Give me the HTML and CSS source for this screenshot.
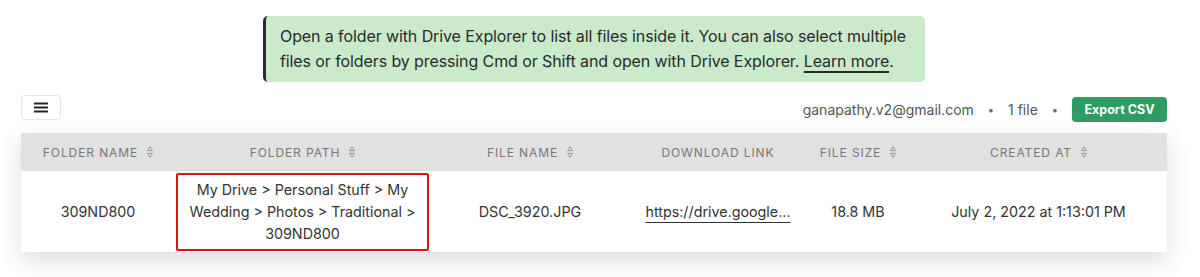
FILE: index.html
```html
<!DOCTYPE html>
<html>
<head>
<meta charset="utf-8">
<link rel="stylesheet" href="styles.css">
</head>
<body>
<div class="page">
  <div class="callout">
    <span class="line">Open a folder with Drive Explorer to list all files inside it. You can also select multiple</span>
    <span class="line"><span>files or folders by pressing Cmd or Shift and open with Drive Explorer. </span><a class="learn" href="#">Learn more</a><span>.</span></span>
  </div>
  <div class="toolbar">
    <button class="menu-btn" aria-label="Menu">
      <svg width="14" height="11" viewBox="0 0 14 11"><rect x="0" y="0.5" width="14" height="2" rx="0.5" fill="#222"/><rect x="0" y="4.5" width="14" height="2" rx="0.5" fill="#222"/><rect x="0" y="8.5" width="14" height="2" rx="0.5" fill="#222"/></svg>
    </button>
    <div class="meta">
      <span class="email">ganapathy.v2@gmail.com</span>
      <span class="dot">•</span>
      <span class="count">1 file</span>
      <span class="dot">•</span>
      <button class="export">Export CSV</button>
    </div>
  </div>
  <div class="table">
    <div class="thead">
      <div class="th c1">Folder Name <svg class="sort" width="6" height="12" viewBox="0 0 6 12"><path d="M3 0.7 L5.4 4.6 H0.6 Z M3 11.3 L5.4 7.4 H0.6 Z" fill="none" stroke="#8a8a8a" stroke-width="0.8" stroke-linejoin="round"/></svg></div>
      <div class="th c2">Folder Path <svg class="sort" width="6" height="12" viewBox="0 0 6 12"><path d="M3 0.7 L5.4 4.6 H0.6 Z M3 11.3 L5.4 7.4 H0.6 Z" fill="none" stroke="#8a8a8a" stroke-width="0.8" stroke-linejoin="round"/></svg></div>
      <div class="th c3">File Name <svg class="sort" width="6" height="12" viewBox="0 0 6 12"><path d="M3 0.7 L5.4 4.6 H0.6 Z M3 11.3 L5.4 7.4 H0.6 Z" fill="none" stroke="#8a8a8a" stroke-width="0.8" stroke-linejoin="round"/></svg></div>
      <div class="th c4">Download Link</div>
      <div class="th c5">File Size <svg class="sort" width="6" height="12" viewBox="0 0 6 12"><path d="M3 0.7 L5.4 4.6 H0.6 Z M3 11.3 L5.4 7.4 H0.6 Z" fill="none" stroke="#8a8a8a" stroke-width="0.8" stroke-linejoin="round"/></svg></div>
      <div class="th c6">Created At <svg class="sort" width="6" height="12" viewBox="0 0 6 12"><path d="M3 0.7 L5.4 4.6 H0.6 Z M3 11.3 L5.4 7.4 H0.6 Z" fill="none" stroke="#8a8a8a" stroke-width="0.8" stroke-linejoin="round"/></svg></div>
    </div>
    <div class="tr">
      <div class="td c1">309ND800</div>
      <div class="td c2"><div class="path-box">My Drive &gt; Personal Stuff &gt; My Wedding &gt; Photos &gt; Traditional &gt; 309ND800</div></div>
      <div class="td c3">DSC_3920.JPG</div>
      <div class="td c4"><a class="dl" href="#">https://drive.google...</a></div>
      <div class="td c5">18.8 MB</div>
      <div class="td c6">July 2, 2022 at 1:13:01 PM</div>
    </div>
  </div>
</div>
</body>
</html>
```

FILE: styles.css
```css
* { box-sizing: border-box; }
html, body { margin: 0; padding: 0; background: #fff; }
body {
  font-family: Inter, "Liberation Sans", Arial, sans-serif;
  color: #333;
}
.page {
  width: 1200px;
  min-height: 277px;
  padding: 16px 33px 0 21px;
}
.callout {
  width: 662px;
  height: 66px;
  margin-left: 242px;
  background: #c9ebca;
  border-left: 3px solid #2b2b2b;
  border-radius: 5px;
  padding: 8px 10px 0 14px;
  font-size: 16px;
  line-height: 25px;
  color: #2a2a2a;
  letter-spacing: -0.1px;
}
.line {
  display: block;
  white-space: nowrap;
}
.learn {
  color: #2a2a2a;
  text-decoration: underline;
  text-underline-offset: 4px;
  text-decoration-thickness: 1.5px;
}
.toolbar {
  display: flex;
  justify-content: space-between;
  align-items: flex-start;
  margin-top: 13px;
  height: 38px;
}
.menu-btn {
  width: 40px;
  height: 25px;
  border: 1px solid #e4e4e4;
  border-radius: 4px;
  background: #fff;
  padding: 0;
  display: flex;
  align-items: center;
  justify-content: center;
  margin: 0;
}
.meta {
  display: flex;
  align-items: center;
  margin-top: 2px;
  font-size: 14px;
  color: #555;
}
.email { margin-right: 14px; }
.dot { font-size: 11px; color: #666; margin-right: 14px; }
.count { margin-right: 14px; }
.export {
  background: #2e9c63;
  color: #fff;
  border: 0;
  border-radius: 4px;
  width: 95px;
  height: 25px;
  font-family: inherit;
  font-weight: 700;
  font-size: 12.5px;
  padding: 0;
  margin: 0;
}
.table {
  width: 1146px;
  background: #fff;
  box-shadow: 0 8px 22px rgba(0,0,0,0.14);
}
.thead {
  display: flex;
  height: 38px;
  background: #e1e1e1;
}
.th {
  display: flex;
  align-items: center;
  justify-content: center;
  gap: 9px;
  font-size: 12px;
  letter-spacing: 0.9px;
  text-transform: uppercase;
  color: #777;
}
.sort { flex: none; }
.tr {
  display: flex;
  height: 81px;
}
.td {
  display: flex;
  align-items: center;
  justify-content: center;
  text-align: center;
  font-size: 14.3px;
  line-height: 22px;
  color: #333;
}
.c1 { width: 154px; }
.c2 { width: 255px; }
.c3 { width: 200px; }
.c4 { width: 176px; }
.c5 { width: 104px; }
.c6 { width: 257px; }
.path-box {
  width: 253px;
  height: 78px;
  border: 2px solid #d9141b;
  border-radius: 2px;
  display: flex;
  align-items: center;
  justify-content: center;
  padding: 0 10px;
}
.dl {
  color: #333;
  text-decoration: underline;
  text-underline-offset: 5px;
  text-decoration-thickness: 1px;
}
```
